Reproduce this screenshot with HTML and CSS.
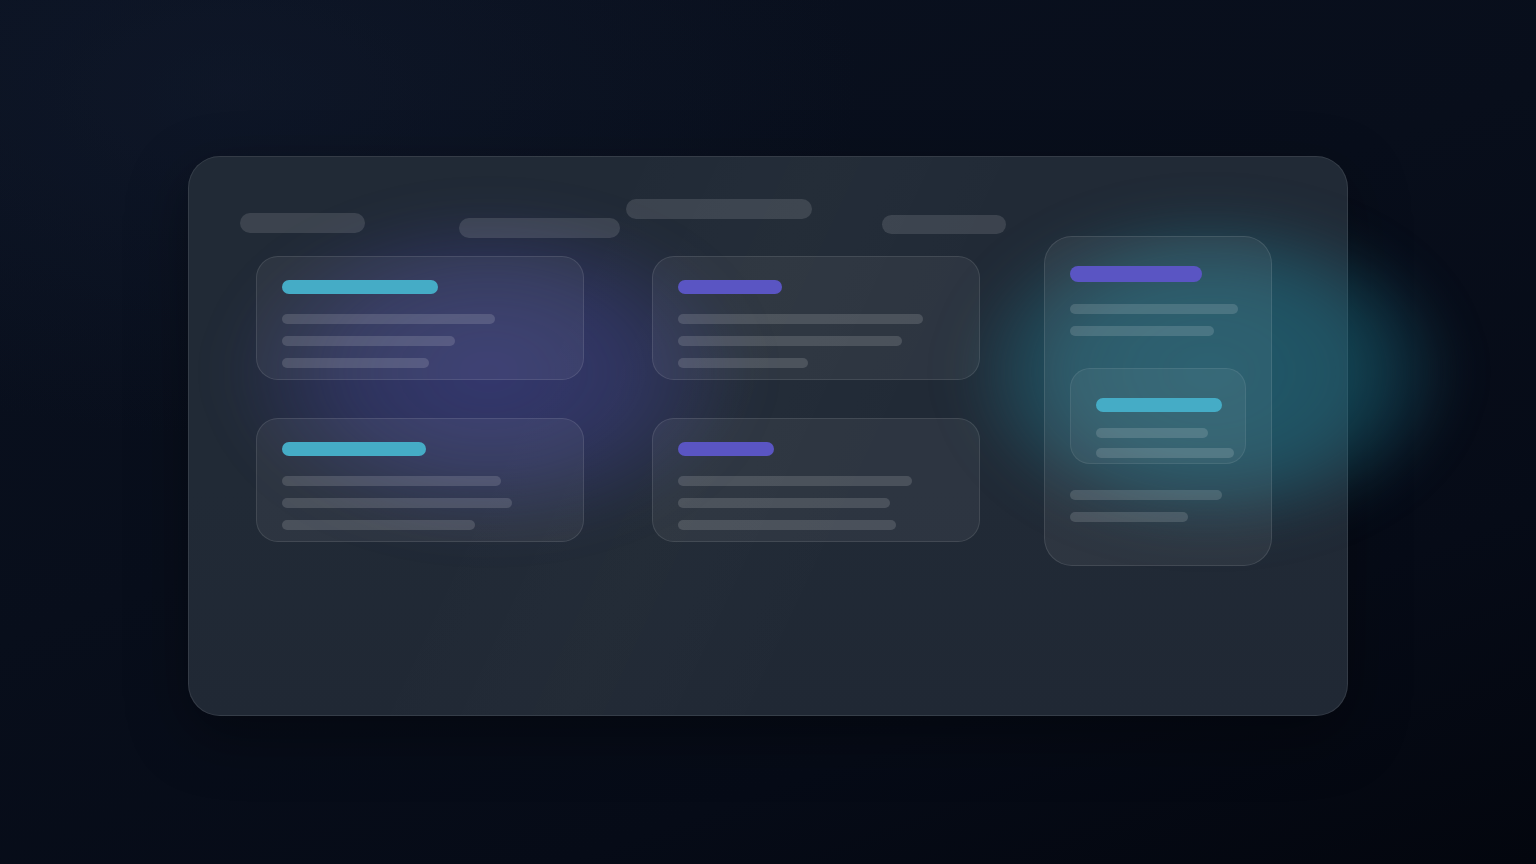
FILE: index.html
```html
<!DOCTYPE html>
<html lang="en">
<head>
<meta charset="utf-8">
<title>Skeleton dashboard</title>
<link rel="stylesheet" href="styles.css">
</head>
<body>
  <div class="stage">
    <div class="panel">
      <div class="glow glow-purple"></div>
      <div class="glow glow-teal"></div>
      <div class="header">
        <span class="pill pill-1"></span>
        <span class="pill pill-2"></span>
        <span class="pill pill-3"></span>
        <span class="pill pill-4"></span>
      </div>
      <div class="body">
        <div class="cards">
          <div class="card">
            <span class="title cyan" style="width:156px"></span>
            <div class="lines">
              <span class="line" style="width:213px"></span>
              <span class="line" style="width:173px"></span>
              <span class="line" style="width:147px"></span>
            </div>
          </div>
          <div class="card">
            <span class="title purple" style="width:104px"></span>
            <div class="lines">
              <span class="line" style="width:245px"></span>
              <span class="line" style="width:224px"></span>
              <span class="line" style="width:130px"></span>
            </div>
          </div>
          <div class="card">
            <span class="title cyan" style="width:144px"></span>
            <div class="lines">
              <span class="line" style="width:219px"></span>
              <span class="line" style="width:230px"></span>
              <span class="line" style="width:193px"></span>
            </div>
          </div>
          <div class="card">
            <span class="title purple" style="width:96px"></span>
            <div class="lines">
              <span class="line" style="width:234px"></span>
              <span class="line" style="width:212px"></span>
              <span class="line" style="width:218px"></span>
            </div>
          </div>
        </div>
        <div class="side">
          <span class="title tall purple" style="width:132px"></span>
          <div class="lines side-lines">
            <span class="line" style="width:168px"></span>
            <span class="line" style="width:144px"></span>
          </div>
          <div class="inner">
            <span class="title cyan" style="width:126px"></span>
            <div class="lines inner-lines">
              <span class="line" style="width:112px"></span>
              <span class="line" style="width:138px"></span>
            </div>
          </div>
          <div class="lines bottom-lines">
            <span class="line" style="width:152px"></span>
            <span class="line" style="width:118px"></span>
          </div>
        </div>
      </div>
    </div>
  </div>
</body>
</html>
```

FILE: styles.css
```css
* { box-sizing: border-box; }

html, body {
  margin: 0;
  height: 100%;
}

body {
  font-family: "Inter", "Liberation Sans", sans-serif;
  background:
    radial-gradient(ellipse 900px 500px at 15% 10%, rgba(20, 30, 50, 0.45), transparent 70%),
    linear-gradient(160deg, #0a1120 0%, #080e1b 45%, #060b17 75%, #03060e 100%);
  overflow: hidden;
}

.stage {
  width: 1536px;
  height: 864px;
  padding-top: 156px;
  padding-left: 188px;
}

.panel {
  position: relative;
  width: 1160px;
  height: 560px;
  border-radius: 32px;
  border: 1px solid rgba(255, 255, 255, 0.09);
  background:
    linear-gradient(115deg, rgba(255,255,255,0.0) 30%, rgba(255,255,255,0.012) 45%, rgba(255,255,255,0) 60%),
    linear-gradient(180deg, #212a36 0%, #212a36 60%, #202834 100%);
  padding: 42px 0 0 51px;
  box-shadow: 0 20px 60px rgba(0, 0, 0, 0.35);
}

.glow {
  position: absolute;
  pointer-events: none;
  border-radius: 50%;
  filter: blur(20px);
}

.glow-purple {
  left: 30px;
  top: 45px;
  width: 540px;
  height: 340px;
  background: radial-gradient(ellipse at center, rgba(80, 76, 190, 0.42) 0%, rgba(80, 76, 190, 0.3) 35%, rgba(80, 76, 190, 0) 70%);
}

.glow-teal {
  left: 765px;
  top: 45px;
  width: 510px;
  height: 340px;
  background: radial-gradient(ellipse at center, rgba(32, 120, 140, 0.62) 0%, rgba(32, 120, 140, 0.5) 40%, rgba(32, 120, 140, 0) 70%);
}

.header {
  position: relative;
  display: flex;
  align-items: flex-start;
  height: 39px;
}

.pill {
  display: block;
  flex-shrink: 0;
  height: 20px;
  border-radius: 10px;
  background: rgba(255, 255, 255, 0.12);
}

.pill-1 { width: 125px; margin-top: 14px; }
.pill-2 { width: 161px; margin-top: 19px; margin-left: 94px; }
.pill-3 { width: 186px; margin-top: 0; margin-left: 6px; }
.pill-4 { width: 124px; margin-top: 16px; margin-left: 70px; height: 19px; }

.body {
  position: relative;
  display: flex;
  align-items: flex-start;
  margin-left: 16px;
}

.cards {
  display: grid;
  grid-template-columns: 328px 328px;
  grid-auto-rows: 124px;
  column-gap: 68px;
  row-gap: 38px;
  margin-top: 18px;
}

.card {
  border-radius: 22px;
  border: 1px solid rgba(255, 255, 255, 0.1);
  background: rgba(255, 255, 255, 0.055);
  padding: 23px 25px 0;
  display: flex;
  flex-direction: column;
}

.title {
  display: block;
  flex-shrink: 0;
  height: 14px;
  border-radius: 7px;
}

.title.tall {
  height: 16px;
  border-radius: 8px;
}

.cyan { background: #45acc6; }
.purple { background: #5a55c3; }

.lines {
  display: flex;
  flex-direction: column;
  flex-shrink: 0;
  gap: 12px;
  margin-top: 20px;
}

.line {
  display: block;
  flex-shrink: 0;
  height: 10px;
  border-radius: 5px;
  background: rgba(255, 255, 255, 0.14);
}

.side {
  width: 228px;
  height: 330px;
  margin-left: 64px;
  margin-top: -2px;
  border-radius: 28px;
  border: 1px solid rgba(255, 255, 255, 0.1);
  background: rgba(255, 255, 255, 0.06);
  padding: 29px 0 0 25px;
  display: flex;
  flex-direction: column;
}

.side-lines {
  margin-top: 22px;
}

.inner {
  flex-shrink: 0;
  width: 176px;
  height: 96px;
  margin-top: 32px;
  border-radius: 20px;
  border: 1px solid rgba(255, 255, 255, 0.08);
  background: rgba(255, 255, 255, 0.05);
  padding: 29px 0 0 25px;
}

.inner-lines {
  margin-top: 16px;
  gap: 10px;
}

.bottom-lines {
  margin-top: 26px;
}
```
